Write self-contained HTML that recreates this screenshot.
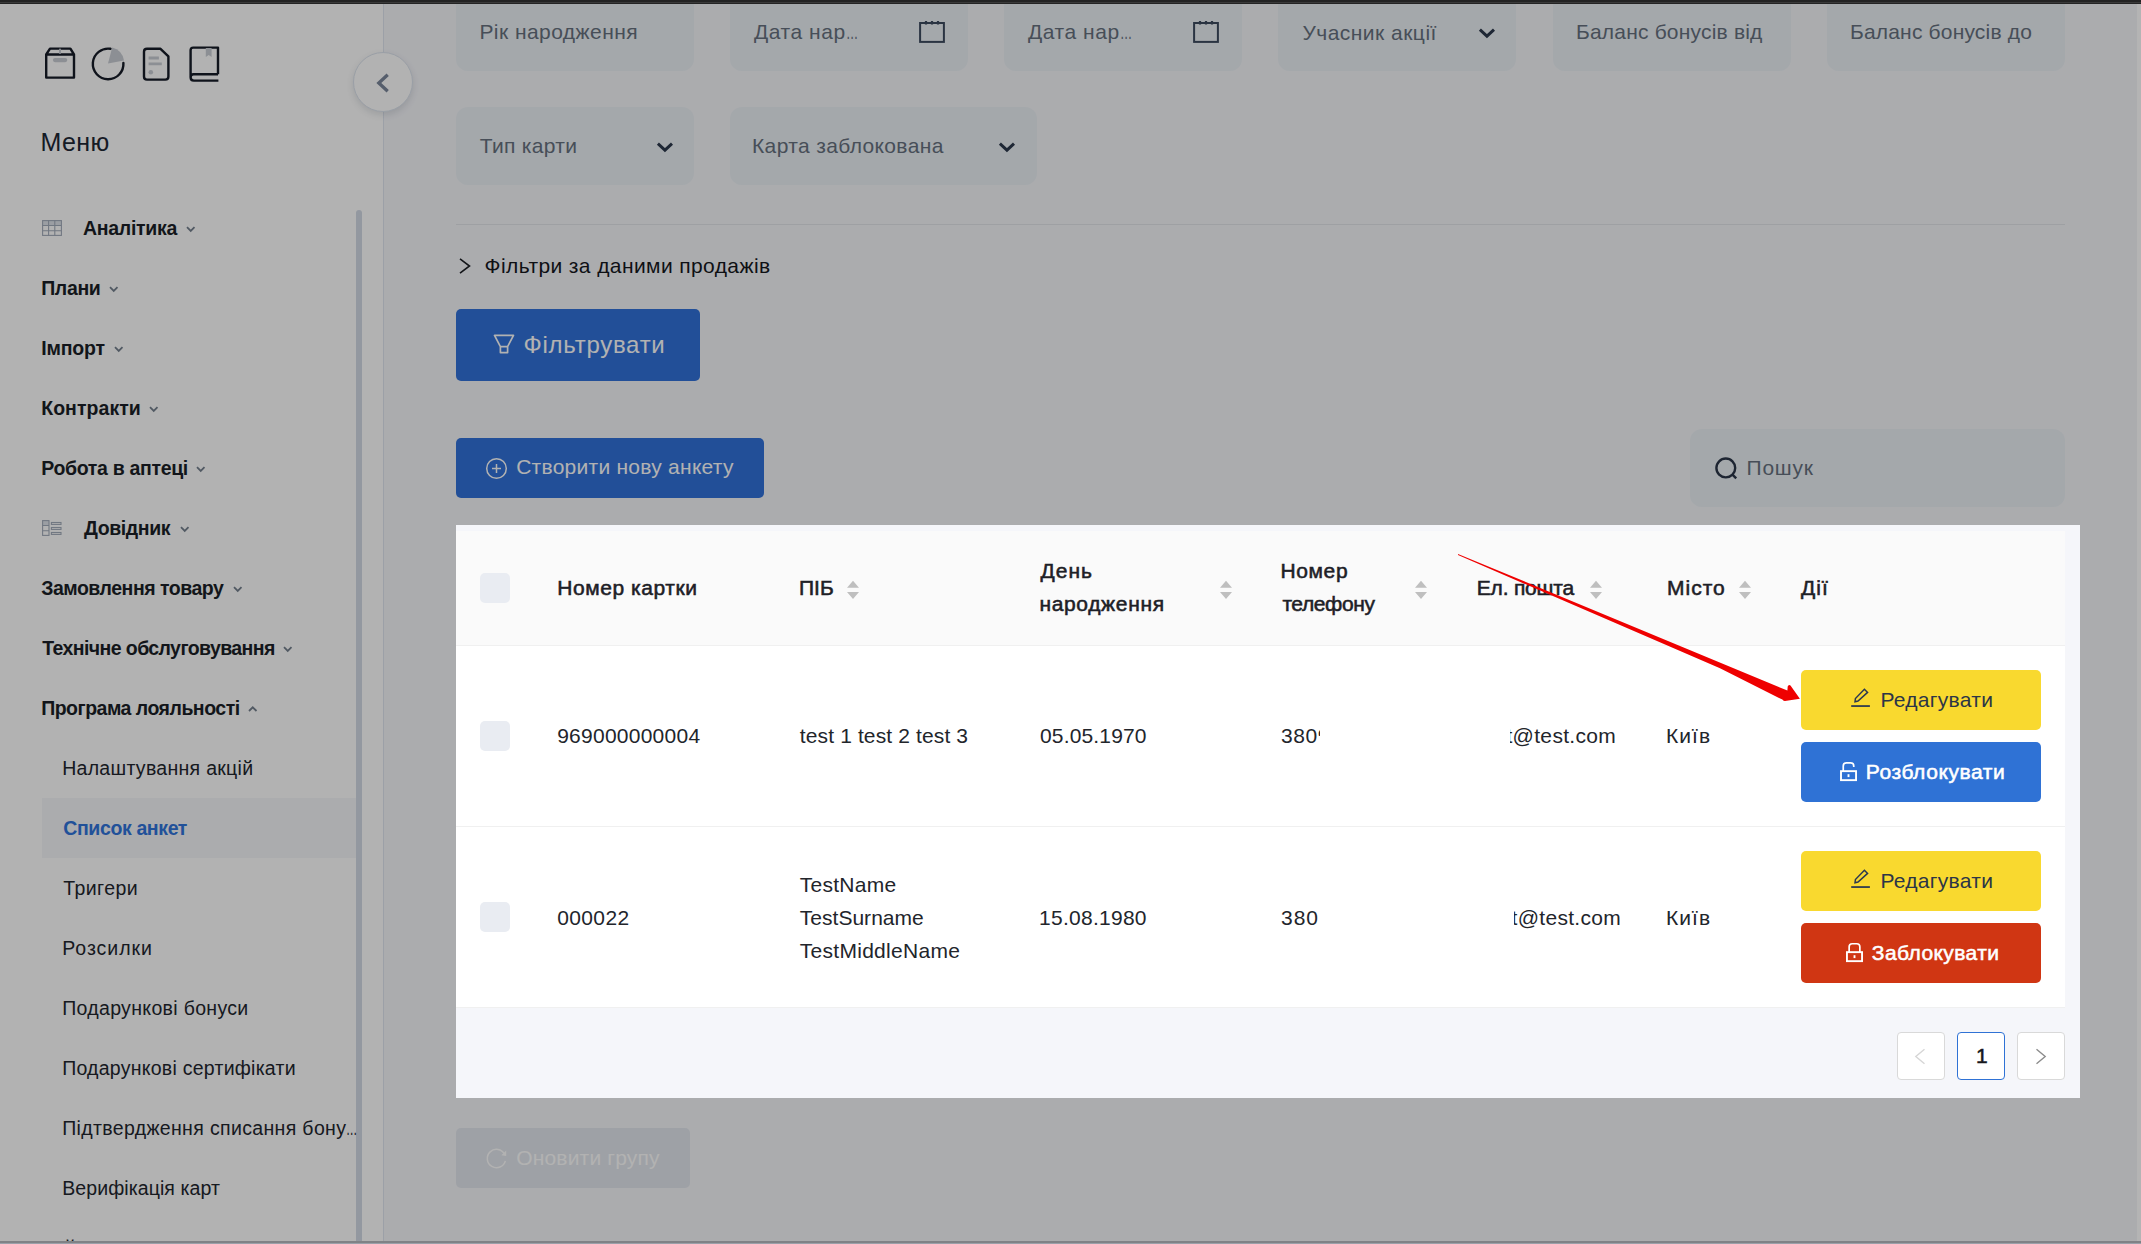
<!DOCTYPE html>
<html lang="uk">
<head>
<meta charset="utf-8">
<title>Список анкет</title>
<style>
*{box-sizing:border-box;margin:0;padding:0}
html,body{width:2141px;height:1244px;overflow:hidden;background:#f5f6fa}
body{position:relative;font-family:"Liberation Sans",sans-serif;color:#1f2329;font-size:21px}
.abs{position:absolute}
.t{position:absolute;white-space:nowrap}
.el{display:inline-block;transform:scaleX(.58);transform-origin:0 50%}
#side{position:absolute;left:0;top:0;width:384px;height:1244px;background:#fff;border-right:1px solid #e0e6f0;overflow:hidden}
#selbg{position:absolute;left:42px;top:798px;width:314px;height:60px;background:#f5f6fa}
#sbar{position:absolute;left:356px;top:210px;width:6px;height:1040px;border-radius:3px;background:#d3dae6}
#coll{position:absolute;left:353.1px;top:51.9px;width:60px;height:60px;border-radius:50%;background:#fff;border:1px solid #dde4ee;box-shadow:0 3px 7px rgba(20,30,50,.12)}
.inp{position:absolute;height:78px;background:#ebf1f5;border-radius:12px}
.btn{position:absolute;border-radius:5px}
.pg{width:48px;height:48px;background:#fff;border:1px solid #d9d9d9;border-radius:4px}
</style>
</head>
<body>
<div id="side">
<svg class="abs" style="left:42px;top:44px" width="184" height="42" viewBox="0 0 184 42" fill="none" stroke="#161c28" stroke-width="2.4" stroke-linejoin="round" stroke-linecap="round">
<path d="M4.2 10.5 L8 4.6 H28.4 L32 10.5 V33.6 H4.2 Z M4.2 10.5 H32"/>
<rect x="10.9" y="14" width="14.4" height="4.2" rx="2.1" fill="#c9cdd4" stroke="none"/>
<path d="M18 5.5 V9" stroke="#c9cdd4" stroke-width="2"/>
<path d="M68.5 4.8 A15.3 15.3 0 1 0 81.4 19"/>
<path d="M66 19.4 L70.2 3.6 A16.3 16.3 0 0 1 82 16.5 Z" fill="#c9cdd4" stroke="none"/>
<path d="M105 4.8 H118.5 L126.4 12.4 V32.5 Q126.4 35.6 123.3 35.6 H105 Q102 35.6 102 32.5 V7.8 Q102 4.8 105 4.8 Z"/>
<path d="M106.6 14 H116.9 M106.6 19.8 H119.8" stroke="#c9cdd4" stroke-width="2.8" stroke-linecap="butt"/>
<circle cx="108.8" cy="28.3" r="2.3" fill="#c9cdd4" stroke="none"/>
<path d="M176 30.2 H151.5 Q148.6 30.2 148.6 33.3 V6.2 Q148.6 3.6 151.2 3.6 H176 V30.2 M148.6 33.3 Q148.6 36.6 151.8 36.6 H176.4" stroke-linecap="butt"/>
<path d="M163.8 4 H169.6 V13 L166.7 11 L163.8 13 Z" fill="#c9cdd4" stroke="none"/>
</svg>
<svg class="abs" style="left:42px;top:220px" width="20" height="16" viewBox="0 0 20 16" fill="none" stroke="#a3acbb" stroke-width="1.1"><rect x="0.6" y="0.6" width="18.8" height="4.9" fill="#dfe3ea" stroke="none"/><rect x="0.6" y="0.6" width="18.8" height="14.8"/><path d="M0.6 5.5 H19.4 M0.6 10.7 H19.4 M6.6 0.6 V15.4 M12.8 0.6 V15.4"/></svg>
<svg class="abs" style="left:42px;top:520px" width="20" height="16" viewBox="0 0 20 16" fill="none" stroke="#a3acbb" stroke-width="1.1"><rect x="0.6" y="0.6" width="6.4" height="4.9" fill="#dfe3ea" stroke="none"/><rect x="0.6" y="0.6" width="6.4" height="14.8"/><path d="M0.6 5.5 H7 M0.6 10.7 H7"/><rect x="9.4" y="2.5" width="9.6" height="1.9"/><rect x="9.4" y="7.5" width="9.6" height="1.9"/><rect x="9.4" y="12.5" width="9.6" height="1.9"/></svg>
<div id="selbg"></div>
<svg class="abs" style="left:186.0px;top:226.1px" width="11" height="7" viewBox="0 0 11 7" fill="none" stroke="#75808e" stroke-width="1.8"><path d="M1 1.2 L4.75 4.9 L8.5 1.2"/></svg>
<svg class="abs" style="left:108.6px;top:286.1px" width="11" height="7" viewBox="0 0 11 7" fill="none" stroke="#75808e" stroke-width="1.8"><path d="M1 1.2 L4.75 4.9 L8.5 1.2"/></svg>
<svg class="abs" style="left:113.8px;top:346.1px" width="11" height="7" viewBox="0 0 11 7" fill="none" stroke="#75808e" stroke-width="1.8"><path d="M1 1.2 L4.75 4.9 L8.5 1.2"/></svg>
<svg class="abs" style="left:148.9px;top:406.1px" width="11" height="7" viewBox="0 0 11 7" fill="none" stroke="#75808e" stroke-width="1.8"><path d="M1 1.2 L4.75 4.9 L8.5 1.2"/></svg>
<svg class="abs" style="left:195.9px;top:466.1px" width="11" height="7" viewBox="0 0 11 7" fill="none" stroke="#75808e" stroke-width="1.8"><path d="M1 1.2 L4.75 4.9 L8.5 1.2"/></svg>
<svg class="abs" style="left:179.8px;top:526.1px" width="11" height="7" viewBox="0 0 11 7" fill="none" stroke="#75808e" stroke-width="1.8"><path d="M1 1.2 L4.75 4.9 L8.5 1.2"/></svg>
<svg class="abs" style="left:232.8px;top:586.1px" width="11" height="7" viewBox="0 0 11 7" fill="none" stroke="#75808e" stroke-width="1.8"><path d="M1 1.2 L4.75 4.9 L8.5 1.2"/></svg>
<svg class="abs" style="left:283.1px;top:646.1px" width="11" height="7" viewBox="0 0 11 7" fill="none" stroke="#75808e" stroke-width="1.8"><path d="M1 1.2 L4.75 4.9 L8.5 1.2"/></svg>
<svg class="abs" style="left:248.4px;top:706.1px" width="11" height="7" viewBox="0 0 11 7" fill="none" stroke="#75808e" stroke-width="1.8"><path d="M1 5 L4.75 1.3 L8.5 5"/></svg>
<div id="sbar"></div>
<div class="t" style="left:40.4px;top:122.5px;font-size:25px;line-height:38px;color:#1e2735;letter-spacing:0.47px">Меню</div>
<div class="t" style="left:83.0px;top:213.5px;font-size:19.5px;line-height:29px;color:#1b1f27;font-weight:bold;letter-spacing:-0.29px">Аналітика</div>
<div class="t" style="left:41.2px;top:273.5px;font-size:19.5px;line-height:29px;color:#1b1f27;font-weight:bold;letter-spacing:-0.35px">Плани</div>
<div class="t" style="left:41.2px;top:333.5px;font-size:19.5px;line-height:29px;color:#1b1f27;font-weight:bold;letter-spacing:-0.16px">Імпорт</div>
<div class="t" style="left:41.2px;top:393.5px;font-size:19.5px;line-height:29px;color:#1b1f27;font-weight:bold;letter-spacing:0.06px">Контракти</div>
<div class="t" style="left:41.2px;top:453.5px;font-size:19.5px;line-height:29px;color:#1b1f27;font-weight:bold;letter-spacing:-0.32px">Робота в аптеці</div>
<div class="t" style="left:84.0px;top:513.5px;font-size:19.5px;line-height:29px;color:#1b1f27;font-weight:bold;letter-spacing:-0.41px">Довідник</div>
<div class="t" style="left:41.2px;top:573.5px;font-size:19.5px;line-height:29px;color:#1b1f27;font-weight:bold;letter-spacing:-0.49px">Замовлення товару</div>
<div class="t" style="left:42.2px;top:633.5px;font-size:19.5px;line-height:29px;color:#1b1f27;font-weight:bold;letter-spacing:-0.59px">Технічне обслуговування</div>
<div class="t" style="left:41.2px;top:693.5px;font-size:19.5px;line-height:29px;color:#1b1f27;font-weight:bold;letter-spacing:-0.50px">Програма лояльності</div>
<div class="t" style="left:62.2px;top:753.5px;font-size:19.5px;line-height:29px;color:#22262e;letter-spacing:0.29px">Налаштування акцій</div>
<div class="t" style="left:63.2px;top:813.5px;font-size:19.5px;line-height:29px;color:#3074dc;font-weight:bold;letter-spacing:-0.37px">Список анкет</div>
<div class="t" style="left:63.2px;top:873.5px;font-size:19.5px;line-height:29px;color:#22262e;letter-spacing:0.43px">Тригери</div>
<div class="t" style="left:62.2px;top:933.5px;font-size:19.5px;line-height:29px;color:#22262e;letter-spacing:0.97px">Розсилки</div>
<div class="t" style="left:62.2px;top:993.5px;font-size:19.5px;line-height:29px;color:#22262e;letter-spacing:0.33px">Подарункові бонуси</div>
<div class="t" style="left:62.2px;top:1053.5px;font-size:19.5px;line-height:29px;color:#22262e;letter-spacing:0.25px">Подарункові сертифікати</div>
<div class="t" style="left:62.2px;top:1113.5px;font-size:19.5px;line-height:29px;color:#22262e;letter-spacing:0.35px">Підтвердження списання бону<span class="el">…</span></div>
<div class="t" style="left:62.2px;top:1173.5px;font-size:19.5px;line-height:29px;color:#22262e;letter-spacing:0.09px">Верифікація карт</div>
<div class="t" style="left:63.0px;top:1237.0px;font-size:19.5px;line-height:29px;color:#22262e;letter-spacing:-0.95px">Ймовірність</div>
</div>
<div id="main">
<div id="coll"><svg class="abs" style="left:18.4px;top:17.3px" width="20" height="26" viewBox="0 0 20 26" fill="none" stroke="#7b879b" stroke-width="3.3"><path d="M15.7 4.7 L6.8 13 L15.7 21.3"/></svg></div>
<div class="inp" style="left:456px;top:-7.5px;width:238px"></div>
<div class="inp" style="left:730px;top:-7.5px;width:238px"></div>
<div class="inp" style="left:1004px;top:-7.5px;width:238px"></div>
<div class="inp" style="left:1278px;top:-7.5px;width:238px"></div>
<div class="inp" style="left:1553px;top:-7.5px;width:238px"></div>
<div class="inp" style="left:1827px;top:-7.5px;width:238px"></div>
<svg class="abs" style="left:918px;top:20px" width="28" height="24" viewBox="0 0 28 24" fill="none" stroke="#3d4b5f" stroke-width="2"><rect x="2.1" y="3" width="23.8" height="18.9"/><path d="M8 1 V4.6 M14 1 V4.6 M20 1 V4.6" stroke-width="2.2"/></svg>
<svg class="abs" style="left:1192px;top:20px" width="28" height="24" viewBox="0 0 28 24" fill="none" stroke="#3d4b5f" stroke-width="2"><rect x="2.1" y="3" width="23.8" height="18.9"/><path d="M8 1 V4.6 M14 1 V4.6 M20 1 V4.6" stroke-width="2.2"/></svg>
<svg class="abs" style="left:1478px;top:28px" width="18" height="12" viewBox="0 0 18 12" fill="none" stroke="#2c384c" stroke-width="3"><path d="M1.9 1.7 L8.95 8.1 L16 1.7"/></svg>
<div class="inp" style="left:456px;top:107px;width:238px"></div>
<div class="inp" style="left:730px;top:107px;width:307px"></div>
<svg class="abs" style="left:656px;top:142px" width="18" height="12" viewBox="0 0 18 12" fill="none" stroke="#2c384c" stroke-width="3"><path d="M1.9 1.7 L8.95 8.1 L16 1.7"/></svg>
<svg class="abs" style="left:998px;top:142px" width="18" height="12" viewBox="0 0 18 12" fill="none" stroke="#2c384c" stroke-width="3"><path d="M1.9 1.7 L8.95 8.1 L16 1.7"/></svg>
<div class="abs" style="left:456px;top:224px;width:1609px;height:1px;background:#e3e6ea"></div>
<svg class="abs" style="left:458px;top:256px" width="14" height="20" viewBox="0 0 14 20" fill="none" stroke="#1c1f24" stroke-width="1.6"><path d="M2 2.8 L11.5 10 L2 17.2"/></svg>
<div class="btn" style="left:456px;top:309px;width:244px;height:72px;background:#3172da"></div>
<svg class="abs" style="left:493px;top:333px" width="24" height="24" viewBox="0 0 24 24" fill="none" stroke="#fff" stroke-width="1.7" stroke-linejoin="round"><path d="M1.5 2.4 H20.5 L14.6 13.6 H7.4 Z M7.4 13.6 V19.6 H14.6 V13.6"/></svg>
<div class="btn" style="left:456px;top:438px;width:308px;height:60px;background:#3172da"></div>
<svg class="abs" style="left:485px;top:457px" width="23" height="23" viewBox="0 0 23 23" fill="none" stroke="#fff" stroke-width="1.5"><circle cx="11.5" cy="11.5" r="9.8"/><path d="M11.5 7 V16 M7 11.5 H16"/></svg>
<div class="inp" style="left:1690px;top:428.5px;width:375px"></div>
<svg class="abs" style="left:1714px;top:456px" width="26" height="26" viewBox="0 0 26 26" fill="none" stroke="#2a3548" stroke-width="2.4"><circle cx="11.8" cy="11.95" r="9.4"/><path d="M18.2 18.4 L22.2 22.4"/></svg>
<div class="btn" style="left:456px;top:1128px;width:234px;height:60px;background:#e3e7ee"></div>
<svg class="abs" style="left:485px;top:1147px" width="23" height="23" viewBox="0 0 23 23" fill="none" stroke="#fff" stroke-width="1.5"><path d="M20.39 13.88 A9.2 9.2 0 1 1 19.62 7.18"/><path d="M21.2 3.6 V8.9 L16.4 8.3 Z" fill="#fff" stroke="none"/></svg>
<div class="t" style="left:479.4px;top:16.0px;font-size:21px;line-height:32px;color:#66707e;letter-spacing:0.45px">Рік народження</div>
<div class="t" style="left:754.0px;top:16.0px;font-size:21px;line-height:32px;color:#66707e;letter-spacing:0.55px">Дата нар<span class="el">…</span></div>
<div class="t" style="left:1028.0px;top:16.0px;font-size:21px;line-height:32px;color:#66707e;letter-spacing:0.55px">Дата нар<span class="el">…</span></div>
<div class="t" style="left:1302.4px;top:17.0px;font-size:21px;line-height:32px;color:#66707e;letter-spacing:0.48px">Учасник акції</div>
<div class="t" style="left:1576.0px;top:16.0px;font-size:21px;line-height:32px;color:#66707e;letter-spacing:0.19px">Баланс бонусів від</div>
<div class="t" style="left:1850.0px;top:16.0px;font-size:21px;line-height:32px;color:#66707e;letter-spacing:0.18px">Баланс бонусів до</div>
<div class="t" style="left:479.8px;top:130.0px;font-size:21px;line-height:32px;color:#66707e;letter-spacing:0.30px">Тип карти</div>
<div class="t" style="left:752.0px;top:130.0px;font-size:21px;line-height:32px;color:#66707e;letter-spacing:0.36px">Карта заблокована</div>
<div class="t" style="left:484.6px;top:250.0px;font-size:21px;line-height:32px;color:#15181d;letter-spacing:0.40px">Фільтри за даними продажів</div>
<div class="t" style="left:523.6px;top:327.0px;font-size:24px;line-height:36px;color:#fff;letter-spacing:0.72px">Фільтрувати</div>
<div class="t" style="left:516.2px;top:451.0px;font-size:21px;line-height:32px;color:#fff;letter-spacing:0.26px">Створити нову анкету</div>
<div class="t" style="left:1746.6px;top:451.5px;font-size:21px;line-height:32px;color:#66707e;letter-spacing:0.75px">Пошук</div>
<div class="t" style="left:516.2px;top:1142.0px;font-size:21px;line-height:32px;color:#fff;letter-spacing:0.18px">Оновити групу</div>
</div>
<div id="tbl">
<div class="abs" style="left:456px;top:531px;width:1609px;height:114px;background:#fafafa"></div>
<div class="abs" style="left:456px;top:645px;width:1609px;height:362px;background:#fff"></div>
<div class="abs" style="left:456px;top:645px;width:1609px;height:1px;background:#f0f0f0"></div>
<div class="abs" style="left:456px;top:826px;width:1609px;height:1px;background:#f0f0f0"></div>
<div class="abs" style="left:456px;top:1007px;width:1609px;height:1px;background:#f0f0f0"></div>
<div class="abs" style="left:480px;top:573px;width:30px;height:30px;border-radius:5px;background:#e9ecf2"></div>
<div class="abs" style="left:480px;top:721px;width:30px;height:30px;border-radius:5px;background:#e9ecf2"></div>
<div class="abs" style="left:480px;top:902px;width:30px;height:30px;border-radius:5px;background:#e9ecf2"></div>
<svg class="abs" style="left:846.2px;top:580px" width="14" height="20" viewBox="0 0 14 20" fill="#bfbfbf"><path d="M7 0.8 L13 7.8 H1 Z M7 19 L13 12 H1 Z"/></svg>
<svg class="abs" style="left:1219px;top:580px" width="14" height="20" viewBox="0 0 14 20" fill="#bfbfbf"><path d="M7 0.8 L13 7.8 H1 Z M7 19 L13 12 H1 Z"/></svg>
<svg class="abs" style="left:1414.2px;top:580px" width="14" height="20" viewBox="0 0 14 20" fill="#bfbfbf"><path d="M7 0.8 L13 7.8 H1 Z M7 19 L13 12 H1 Z"/></svg>
<svg class="abs" style="left:1589px;top:580px" width="14" height="20" viewBox="0 0 14 20" fill="#bfbfbf"><path d="M7 0.8 L13 7.8 H1 Z M7 19 L13 12 H1 Z"/></svg>
<svg class="abs" style="left:1738.2px;top:580px" width="14" height="20" viewBox="0 0 14 20" fill="#bfbfbf"><path d="M7 0.8 L13 7.8 H1 Z M7 19 L13 12 H1 Z"/></svg>
<div class="btn" style="left:1801px;top:670px;width:240px;height:60px;background:#f9d92f"></div>
<svg class="abs" style="left:1850px;top:687px" width="22" height="22" viewBox="0 0 22 22" fill="none" stroke="#2a3850" stroke-width="1.45" stroke-linejoin="miter"><path d="M14.4 2.2 L17.6 5.4 L8 14 L5 14.75 L5.4 11.5 Z"/><path d="M1.2 19.05 H19.9" stroke-width="1.75"/></svg>
<div class="btn" style="left:1801px;top:851px;width:240px;height:60px;background:#f9d92f"></div>
<svg class="abs" style="left:1850px;top:868px" width="22" height="22" viewBox="0 0 22 22" fill="none" stroke="#2a3850" stroke-width="1.45" stroke-linejoin="miter"><path d="M14.4 2.2 L17.6 5.4 L8 14 L5 14.75 L5.4 11.5 Z"/><path d="M1.2 19.05 H19.9" stroke-width="1.75"/></svg>
<div class="btn" style="left:1801px;top:742px;width:240px;height:60px;background:#2f72d5"></div>
<svg class="abs" style="left:1838px;top:761px" width="22" height="22" viewBox="0 0 22 22" fill="none" stroke="#fff" stroke-width="1.9"><rect x="3" y="10.15" width="15.05" height="9"/><path d="M5.25 10 V4.9 Q5.25 1.85 8.3 1.85 H12.7 Q15.75 1.85 15.75 4.9 V6.1" stroke-width="1.7"/><path d="M10.5 13.2 V16.1"/></svg>
<div class="btn" style="left:1801px;top:923px;width:240px;height:60px;background:#d03613"></div>
<svg class="abs" style="left:1843px;top:942px" width="22" height="22" viewBox="0 0 22 22" fill="none" stroke="#fff" stroke-width="1.9"><rect x="3.95" y="10.15" width="15.1" height="9"/><path d="M6.15 10 V4.8 Q6.15 1.75 9.2 1.75 H13.8 Q16.85 1.75 16.85 4.8 V10" stroke-width="1.7"/><path d="M11.5 13.2 V16.1"/></svg>
<div class="abs pg" style="left:1897px;top:1032px"></div>
<div class="abs pg" style="left:1957px;top:1032px;border-color:#2f72d5"></div>
<div class="abs pg" style="left:2017px;top:1032px"></div>
<svg class="abs" style="left:1914px;top:1048px" width="12" height="17" viewBox="0 0 12 17" fill="none" stroke="#d6d6d6" stroke-width="1.4"><path d="M10.5 1.2 L1.8 8.5 L10.5 15.8"/></svg>
<svg class="abs" style="left:2035px;top:1048px" width="12" height="17" viewBox="0 0 12 17" fill="none" stroke="#8c8c8c" stroke-width="1.4"><path d="M1.5 1.2 L10.2 8.5 L1.5 15.8"/></svg>
<div class="t" style="left:557.2px;top:572.0px;font-size:21px;line-height:32px;color:#1d2026;-webkit-text-stroke:0.55px #1d2026;letter-spacing:0.57px">Номер картки</div>
<div class="t" style="left:799.0px;top:572.0px;font-size:21px;line-height:32px;color:#1d2026;-webkit-text-stroke:0.55px #1d2026">ПІБ</div>
<div class="t" style="left:1040.4px;top:555.0px;font-size:21px;line-height:32px;color:#1d2026;-webkit-text-stroke:0.55px #1d2026;letter-spacing:1.07px">День</div>
<div class="t" style="left:1039.4px;top:588.3px;font-size:21px;line-height:32px;color:#1d2026;-webkit-text-stroke:0.55px #1d2026;letter-spacing:0.66px">народження</div>
<div class="t" style="left:1280.4px;top:555.0px;font-size:21px;line-height:32px;color:#1d2026;-webkit-text-stroke:0.55px #1d2026;letter-spacing:0.65px">Номер</div>
<div class="t" style="left:1282.4px;top:588.3px;font-size:21px;line-height:32px;color:#1d2026;-webkit-text-stroke:0.55px #1d2026;letter-spacing:-0.40px">телефону</div>
<div class="t" style="left:1476.8px;top:572.0px;font-size:21px;line-height:32px;color:#1d2026;-webkit-text-stroke:0.55px #1d2026;letter-spacing:-0.20px">Ел. пошта</div>
<div class="t" style="left:1667.0px;top:572.0px;font-size:21px;line-height:32px;color:#1d2026;-webkit-text-stroke:0.55px #1d2026;letter-spacing:1.00px">Місто</div>
<div class="t" style="left:1801.0px;top:572.0px;font-size:21px;line-height:32px;color:#1d2026;-webkit-text-stroke:0.55px #1d2026;letter-spacing:1.10px">Дії</div>
<div class="t" style="left:557.2px;top:720.4px;font-size:21px;line-height:32px;color:#22252b;letter-spacing:0.25px">969000000004</div>
<div class="t" style="left:799.8px;top:720.4px;font-size:21px;line-height:32px;color:#22252b;letter-spacing:0.13px">test 1 test 2 test 3</div>
<div class="t" style="left:1040.0px;top:720.4px;font-size:21px;line-height:32px;color:#22252b;letter-spacing:0.16px">05.05.1970</div>
<div class="t" style="left:1281.0px;top:720.4px;font-size:21px;line-height:32px;color:#22252b;letter-spacing:0.60px">3809</div>
<div class="t" style="left:1506.4px;top:720.4px;font-size:21px;line-height:32px;color:#22252b;letter-spacing:0.33px">t@test.com</div>
<div class="t" style="left:1666.0px;top:720.4px;font-size:21px;line-height:32px;color:#22252b;letter-spacing:1.03px">Київ</div>
<div class="t" style="left:557.2px;top:902.0px;font-size:21px;line-height:32px;color:#22252b;letter-spacing:0.38px">000022</div>
<div class="t" style="left:799.8px;top:869.0px;font-size:21px;line-height:32px;color:#22252b;letter-spacing:0.26px">TestName</div>
<div class="t" style="left:799.8px;top:902.0px;font-size:21px;line-height:32px;color:#22252b;letter-spacing:0.02px">TestSurname</div>
<div class="t" style="left:799.8px;top:935.0px;font-size:21px;line-height:32px;color:#22252b;letter-spacing:0.28px">TestMiddleName</div>
<div class="t" style="left:1039.0px;top:902.0px;font-size:21px;line-height:32px;color:#22252b;letter-spacing:0.27px">15.08.1980</div>
<div class="t" style="left:1281.0px;top:902.0px;font-size:21px;line-height:32px;color:#22252b;letter-spacing:1.00px">380</div>
<div class="t" style="left:1511.6px;top:902.0px;font-size:21px;line-height:32px;color:#22252b;letter-spacing:0.29px">t@test.com</div>
<div class="t" style="left:1666.0px;top:902.0px;font-size:21px;line-height:32px;color:#22252b;letter-spacing:1.03px">Київ</div>
<div class="t" style="left:1880.4px;top:684.0px;font-size:21px;line-height:32px;color:#2c3547;letter-spacing:0.29px">Редагувати</div>
<div class="t" style="left:1880.4px;top:865.0px;font-size:21px;line-height:32px;color:#2c3547;letter-spacing:0.29px">Редагувати</div>
<div class="t" style="left:1865.8px;top:756.0px;font-size:21px;line-height:32px;color:#fff;-webkit-text-stroke:0.55px #fff;letter-spacing:0.57px">Розблокувати</div>
<div class="t" style="left:1871.8px;top:937.0px;font-size:21px;line-height:32px;color:#fff;-webkit-text-stroke:0.55px #fff;letter-spacing:0.42px">Заблокувати</div>
<div class="t" style="left:1976.0px;top:1040.0px;font-size:21px;line-height:32px;color:#16181d;-webkit-text-stroke:0.55px #16181d">1</div>
<div class="abs" style="left:1320.3px;top:715px;width:140px;height:44px;background:#fff"></div>
<div class="abs" style="left:1317.5px;top:736px;width:10px;height:12px;background:#fff"></div>
<div class="abs" style="left:1470px;top:715px;width:40.4px;height:44px;background:#fff"></div>
<div class="abs" style="left:1470px;top:896px;width:43.6px;height:44px;background:#fff"></div>
</div>
<div id="ovl">
<div class="abs" style="left:456px;top:524.9px;width:1624px;height:573.1px;box-shadow:0 0 0 3000px rgba(0,0,0,.3)"></div>
<svg class="abs" style="left:1440px;top:540px" width="400" height="180" viewBox="1440 540 400 180"><path d="M1458 553.9 L1787.4 690.6 L1787.7 686.6 Q1788 685.2 1789.5 685.1 Q1790.6 685.3 1791.2 686.4 L1799.9 698.7 L1785 700.9 Q1783 701 1782.4 699.6 L1720 668.3 L1458 555 Z" fill="#ef0000"/></svg>
<div class="abs" style="left:2137px;top:0;width:4px;height:1244px;background:#b4b4b4"></div>
<div class="abs" style="left:0;top:0;width:2141px;height:5px;background:linear-gradient(#232323 0,#232323 1.9px,#3a3a3a 2px,#3a3a3a 2.9px,#242424 3px,#242424 3.7px,rgba(36,36,36,0) 4.4px)"></div>
<div class="abs" style="left:0;top:1240.7px;width:2141px;height:3.3px;background:linear-gradient(#808286 0,#808286 1.9px,#9aa0a9 2px)"></div>
</div>
</body>
</html>
